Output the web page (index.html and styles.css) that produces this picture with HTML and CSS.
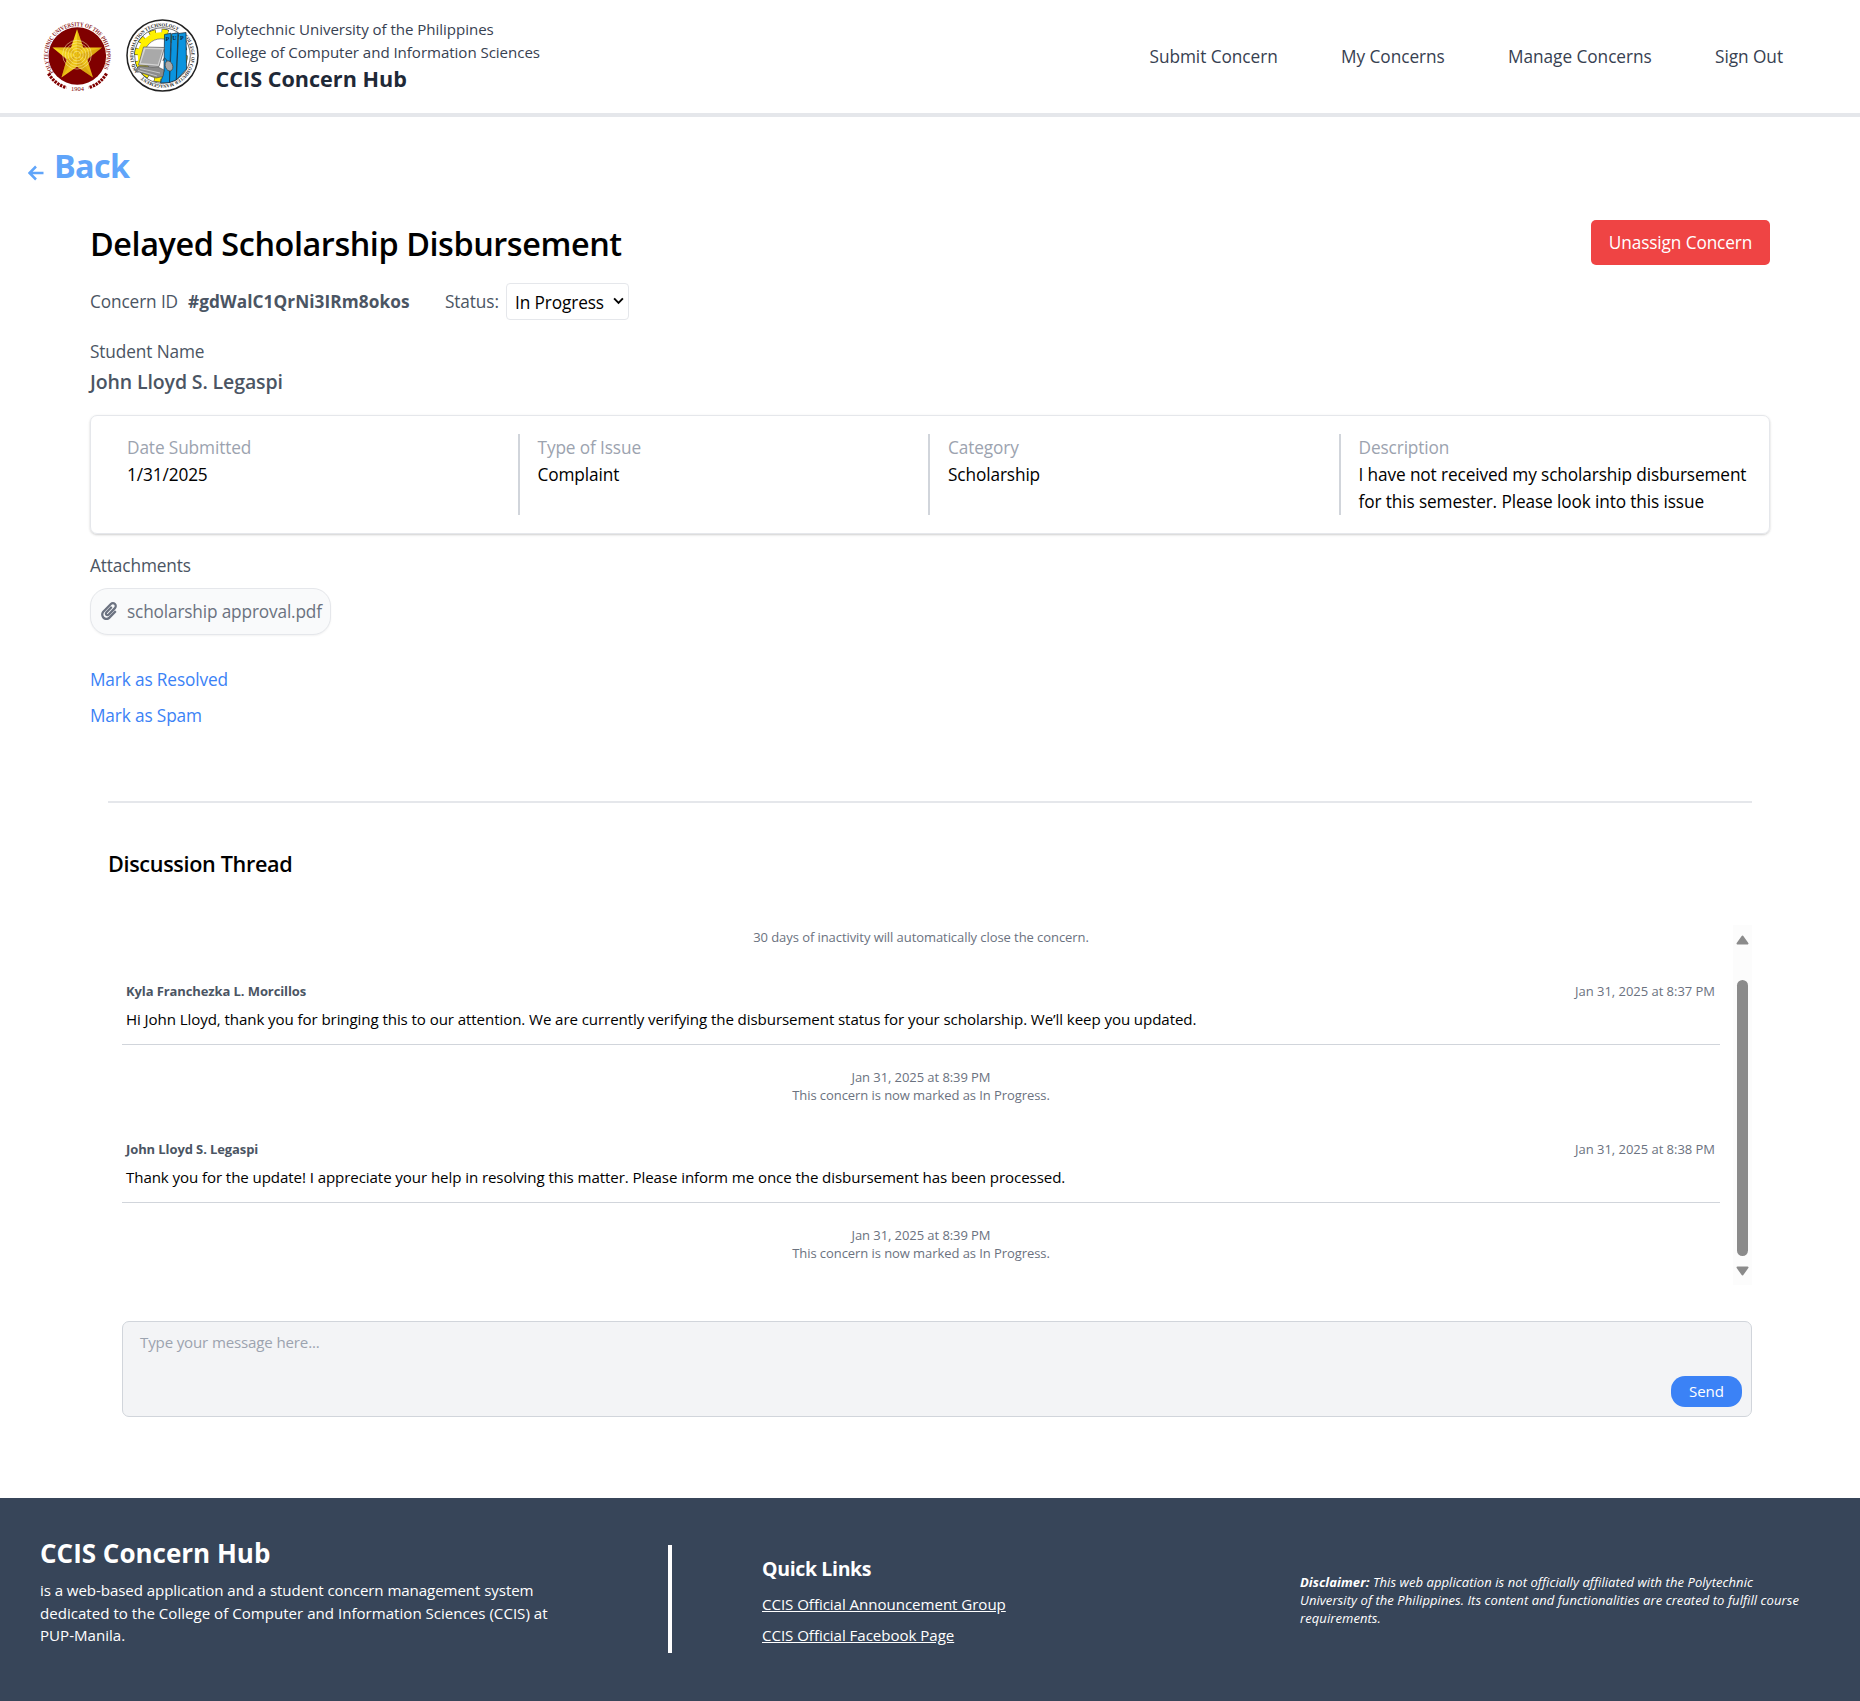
FILE: index.html
```html
<!DOCTYPE html>
<html lang="en">
<head>
<meta charset="utf-8">
<title>CCIS Concern Hub</title>
<link rel="stylesheet" href="styles.css">
</head>
<body>
<header class="topbar">
  <div class="brand">
    <svg class="seal seal-pup" viewBox="0 0 69 74" aria-hidden="true">
      <defs>
        <path id="pupRing" d="M10.5 53.5A29.3 29.3 0 1 1 59.5 51.5"/>
        <linearGradient id="gold" x1="0" y1="0" x2="1" y2="1">
          <stop offset="0" stop-color="#ffe81f"/><stop offset="1" stop-color="#e0a810"/>
        </linearGradient>
      </defs>
      <circle cx="34.3" cy="37" r="28.8" fill="#800000"/>
      <text class="ring-text ring-maroon"><textPath href="#pupRing" textLength="123" lengthAdjust="spacingAndGlyphs">POLYTECHNIC UNIVERSITY OF THE PHILIPPINES</textPath></text>
      <path fill="url(#gold)" d="M34 10.3L40.3 28.6L59 28.6L44.3 40.3L50 58.5L34 47.8L18.5 58.5L23.7 40.3L9.5 28.6L28 28.6Z"/>
      <path fill="#c98d0a" opacity=".4" d="M34 10.3L34 36L40.3 28.6ZM59 28.6L34 36L44.3 40.3ZM50 58.5L34 36L34 47.8ZM18.5 58.5L34 36L23.7 40.3ZM9.5 28.6L34 36L28 28.6Z"/>
      <g fill="none" stroke="#fff3b0" stroke-width=".7" opacity=".75">
        <circle cx="34" cy="35.7" r="3.5"/><circle cx="34" cy="35.7" r="6.2"/><circle cx="34" cy="35.7" r="9"/><circle cx="34" cy="35.7" r="11.8"/><circle cx="34" cy="35.7" r="14.4"/>
      </g>
      <g fill="none" stroke="#800000" stroke-width="3.2" stroke-dasharray="2.4 .9">
        <path d="M5.5 54.5Q12 65.5 23.5 68.5"/><path d="M63.5 54.5Q57 65.5 45.5 68.5"/>
      </g>
      <text class="year" x="34.5" y="72.3">1904</text>
    </svg>
    <svg class="seal seal-ccis" viewBox="0 0 73 73" aria-hidden="true">
      <defs>
        <path id="ccisTop" d="M12.74 53.13A29 29 0 0 1 55.14 14.28"/>
        <path id="ccisSide" d="M58.05 17.1A29 29 0 0 1 15.29 56.28"/>
      </defs>
      <circle cx="36.5" cy="36.5" r="35.5" fill="#fff" stroke="#222" stroke-width="1.5"/>
      <circle cx="36.5" cy="36.5" r="27.8" fill="#fff" stroke="#333" stroke-width=".7"/>
      <text class="ring-text ring-dark"><textPath href="#ccisTop" textLength="79" lengthAdjust="spacingAndGlyphs">AND INFORMATION TECHNOLOGY</textPath></text>
      <text class="ring-text ring-dark"><textPath href="#ccisSide" textLength="88" lengthAdjust="spacingAndGlyphs">COLLEGE OF COMPUTER MANAGEMENT</textPath></text>
      <circle cx="35" cy="36.5" r="22.5" fill="none" stroke="#222" stroke-width="8.4" stroke-dasharray="6.2 5.58"/>
      <circle cx="35" cy="36.5" r="22.5" fill="none" stroke="#fff000" stroke-width="7.4" stroke-dasharray="5.5 6.28" stroke-dashoffset="-.35"/>
      <circle cx="35" cy="36.5" r="20" fill="none" stroke="#fff000" stroke-width="6.5"/>
      <circle cx="35" cy="36.5" r="16.7" fill="#fff" stroke="#444" stroke-width=".6"/>
      <g stroke="#123" stroke-width=".7" fill="#0b94df">
        <path d="M38.5 15.5L45 14.2L43.5 63.5L34.5 64L38 52Z"/>
        <path d="M45.7 14.8L52 13.8L50.3 61L43.5 63.5Z"/>
        <path d="M52.5 14.5L60 13.5L60.5 50L50.3 61Z"/>
      </g>
      <g class="book-letters"><text x="39.5" y="21.5">P</text><text x="46.2" y="21">U</text><text x="54" y="21">P</text></g>
      <path fill="#d3d3d3" stroke="#555" stroke-width=".7" d="M17.5 28L38.5 28.5L33 47.5L12.5 46Z"/>
      <path fill="#a9a9a9" d="M19.5 30L36.5 30.5L31.8 45.5L14.8 44Z"/>
      <path fill="#8b8b8b" stroke="#444" stroke-width=".6" d="M13 47L33 48.5L38 51L37 57.5L30 59L9 51.5Z"/>
      <path stroke="#ddd" stroke-width=".7" fill="none" d="M14 49.5L34 54M12 51.5L31 57"/>
      <ellipse cx="43" cy="47" rx="3.7" ry="5.2" fill="#aaa" stroke="#444" stroke-width=".7" transform="rotate(-20 43 47)"/>
      <path d="M41 42Q38 36 37 42" fill="none" stroke="#333" stroke-width=".8"/>
    </svg>
    <div class="brand-text">
      <span class="brand-line">Polytechnic University of the Philippines</span>
      <span class="brand-line">College of Computer and Information Sciences</span>
      <span class="brand-name">CCIS Concern Hub</span>
    </div>
  </div>
  <nav class="nav">
    <a>Submit Concern</a><a>My Concerns</a><a>Manage Concerns</a><a>Sign Out</a>
  </nav>
</header>

<main class="page">
  <a class="back">
    <svg class="back-arrow" viewBox="0 0 16 16" aria-hidden="true"><path d="M15.5 8H1.8M8 1.5L1.500 8L8 14.5" fill="none" stroke="currentColor" stroke-width="2.5"/></svg>
    <span>Back</span>
  </a>

  <section class="concern">
    <div class="title-row">
      <h1 class="title">Delayed Scholarship Disbursement</h1>
      <button class="unassign">Unassign Concern</button>
    </div>
    <div class="meta">
      <span class="meta-id">Concern ID</span>
      <strong class="meta-code">#gdWalC1QrNi3IRm8okos</strong>
      <span class="meta-status">Status:</span>
      <div class="select">
        <span>In Progress</span>
        <svg viewBox="0 0 12 8" class="chevron" aria-hidden="true"><path d="M1.2 1.2L6 6L10.8 1.2" fill="none" stroke="#000" stroke-width="2.1"/></svg>
      </div>
    </div>
    <div class="label student-label">Student Name</div>
    <div class="student">John Lloyd S. Legaspi</div>

    <div class="card">
      <div class="cell"><div class="cell-label">Date Submitted</div><div>1/31/2025</div></div>
      <div class="cell"><div class="cell-label">Type of Issue</div><div>Complaint</div></div>
      <div class="cell"><div class="cell-label">Category</div><div>Scholarship</div></div>
      <div class="cell"><div class="cell-label">Description</div><div class="desc">I have not received my scholarship disbursement<br>for this semester. Please look into this issue</div></div>
    </div>

    <div class="label">Attachments</div>
    <a class="file">
      <svg class="clip" viewBox="0 0 448 512" aria-hidden="true"><path fill="currentColor" d="M43.246 466.142c-58.43-60.289-57.341-157.511 1.386-217.581L254.392 34c44.316-45.332 116.351-45.336 160.671 0 43.89 44.894 43.943 117.329 0 162.276L232.214 383.128c-29.855 30.537-78.633 30.111-107.982-.998-28.275-29.97-27.368-77.473 1.452-106.953l143.743-146.835c6.182-6.314 16.312-6.422 22.626-.241l22.861 22.379c6.315 6.182 6.422 16.312.241 22.626L171.427 319.927c-4.932 5.045-5.236 13.428-.648 18.292 4.372 4.634 11.245 4.711 15.688.165l182.849-186.851c19.613-20.062 19.613-52.725-.011-72.798-19.189-19.627-49.957-19.637-69.154 0L90.39 293.295c-34.763 35.56-35.299 93.12-1.191 128.313 34.01 35.093 88.985 35.137 123.058.286l172.06-175.999c6.177-6.319 16.307-6.433 22.626-.256l22.877 22.364c6.319 6.177 6.434 16.307.256 22.626l-172.06 175.998c-59.576 60.938-155.943 60.216-214.77-.485z"/></svg>
      <span>scholarship approval.pdf</span>
    </a>
    <div class="actions">
      <a>Mark as Resolved</a>
      <a>Mark as Spam</a>
    </div>

    <section class="thread">
      <hr class="rule">
      <h2 class="thread-title">Discussion Thread</h2>
      <div class="log">
        <div class="log-body">
          <p class="event">30 days of inactivity will automatically close the concern.</p>
          <article class="msg">
            <div class="msg-head"><strong>Kyla Franchezka L. Morcillos</strong><time>Jan 31, 2025 at 8:37 PM</time></div>
            <p class="msg-text">Hi John Lloyd, thank you for bringing this to our attention. We are currently verifying the disbursement status for your scholarship. We’ll keep you updated.</p>
          </article>
          <p class="event event-after">Jan 31, 2025 at 8:39 PM<br>This concern is now marked as In Progress.</p>
          <article class="msg">
            <div class="msg-head"><strong>John Lloyd S. Legaspi</strong><time>Jan 31, 2025 at 8:38 PM</time></div>
            <p class="msg-text">Thank you for the update! I appreciate your help in resolving this matter. Please inform me once the disbursement has been processed.</p>
          </article>
          <p class="event event-after">Jan 31, 2025 at 8:39 PM<br>This concern is now marked as In Progress.</p>
        </div>
        <div class="scrollbar">
          <svg class="sb-arrow" viewBox="0 0 13 10" aria-hidden="true"><path d="M6.5 1.5L11.5 8.5H1.5Z" fill="#8b8b8b" stroke="#8b8b8b" stroke-width="2" stroke-linejoin="round"/></svg>
          <div class="thumb"></div>
          <svg class="sb-arrow" viewBox="0 0 13 10" aria-hidden="true"><path d="M6.5 8.5L11.5 1.5H1.5Z" fill="#8b8b8b" stroke="#8b8b8b" stroke-width="2" stroke-linejoin="round"/></svg>
        </div>
      </div>
      <div class="composer">
        <span class="placeholder">Type your message here...</span>
        <button class="send">Send</button>
      </div>
    </section>
  </section>
</main>

<footer class="footer">
  <div class="foot-about">
    <h2>CCIS Concern Hub</h2>
    <p><span class="foot-first">is a web-based application and a student concern management system</span><br>dedicated to the College of Computer and Information Sciences (CCIS) at<br>PUP-Manila.</p>
  </div>
  <div class="foot-bar"></div>
  <div class="foot-links">
    <h3>Quick Links</h3>
    <a>CCIS Official Announcement Group</a>
    <a>CCIS Official Facebook Page</a>
  </div>
  <p class="foot-note"><strong>Disclaimer:</strong> This web application is not officially affiliated with the Polytechnic<br>University of the Philippines. Its content and functionalities are created to fulfill course<br>requirements.</p>
</footer>
</body>
</html>
```
FILE: styles.css
```css
* { box-sizing: border-box; margin: 0; padding: 0; }
body {
  width: 1860px;
  height: 1701px;
  display: flex;
  flex-direction: column;
  overflow: hidden;
  background: #fff;
  color: #000;
  font: 17.25px/27px "Open Sans", "Noto Sans", sans-serif;
  letter-spacing: -0.12px;
}
button { font: inherit; letter-spacing: inherit; border: 0; color: #fff; }

/* Header */
.topbar {
  height: 117px;
  flex: none;
  display: flex;
  align-items: center;
  justify-content: space-between;
  padding: 0 77px 0 43px;
  border-bottom: 4px solid #e5e7eb;
}
.brand { display: flex; align-items: center; }
.seal { display: block; flex: none; margin-bottom: 2px; overflow: visible; }
.seal-pup { width: 69px; height: 74px; margin-right: 13.5px; }
.seal-ccis { width: 73px; height: 73px; margin-right: 17px; }
.ring-text { font-family: "Liberation Serif", serif; font-weight: 700; letter-spacing: 0; }
.ring-maroon { font-size: 6px; fill: #8c1a1a; }
.ring-dark { font-size: 5px; fill: #222; }
.year { font: 6.5px "Liberation Serif", serif; fill: #800000; text-anchor: middle; letter-spacing: 0; }
.book-letters { font: 700 6px "Liberation Serif", serif; fill: #0a2a4a; letter-spacing: 0; }
.brand-text { display: flex; flex-direction: column; color: #374151; }
.brand-line { font-size: 15.1px; line-height: 23px; letter-spacing: -0.05px; }
.brand-name { font-size: 21.6px; line-height: 31px; font-weight: 700; color: #1f2937; letter-spacing: 0; margin-top: -1px; padding-bottom: 1px; }
.nav { display: flex; gap: 63.3px; color: #374151; letter-spacing: -0.05px; }

/* Concern */
.page { display: flex; flex-direction: column; padding: 28px 90px 0; flex: 1; }
.back {
  display: flex;
  align-items: center;
  gap: 10px;
  height: 40px;
  margin-left: -62px;
  color: #60a5fa;
  font-size: 32.4px;
  font-weight: 700;
  letter-spacing: -0.7px;
}
.back-arrow { width: 16px; height: 16px; margin-top: 16px; }
.concern { display: flex; flex-direction: column; margin-top: 35px; }
.title-row { display: flex; justify-content: space-between; align-items: center; height: 45px; }
.title { font-size: 32.4px; font-weight: 600; line-height: 40px; letter-spacing: -0.43px; }
.unassign { width: 179px; height: 45px; background: #ef4444; border-radius: 5px; }
.meta { display: flex; align-items: center; height: 37px; margin-top: 18px; color: #4b5563; }
.meta-id { width: 98px; }
.meta-code { width: 257px; letter-spacing: 0.06px; }
.meta-status { width: 61px; }
.select {
  display: flex;
  align-items: center;
  justify-content: space-between;
  width: 123px;
  height: 37px;
  padding: 2px 4px 0 8px;
  border: 1px solid #e5e7eb;
  border-radius: 4px;
  color: #000;
}
.chevron { width: 11px; height: 8px; margin-bottom: 3px; }
.label { color: #4b5563; margin-top: 18px; }
.student { font-size: 19.5px; font-weight: 600; line-height: 31.5px; padding-top: 1px; margin-bottom: -1px; color: #4b5563; }
.card {
  display: grid;
  grid-template-columns: repeat(4, minmax(0, 1fr));
  margin-top: 18px;
  padding: 18px;
  border: 1px solid #e5e7eb;
  border-radius: 7px;
  box-shadow: 0 1px 3px rgba(0, 0, 0, .1), 0 1px 2px rgba(0, 0, 0, .1);
}
.cell { padding: 0 18px; border-right: 2px solid #d1d5db; white-space: nowrap; }
.cell:last-child { border-right: 0; }
.cell-label { color: #9ca3af; }
.file {
  display: flex;
  align-items: center;
  gap: 10px;
  width: 241px;
  height: 47px;
  margin-top: 9px;
  padding: 0 9px 0 10px;
  color: #6b7280;
  background: #f9fafb;
  border: 1px solid #e5e7eb;
  border-radius: 18px;
  box-shadow: 0 1px 2px rgba(0, 0, 0, .05);
  white-space: nowrap;
  letter-spacing: -0.16px;
}
.clip { width: 16px; height: 18px; flex: none; }
.actions { display: flex; flex-direction: column; gap: 9px; margin-top: 31px; color: #3b82f6; letter-spacing: -0.14px; }

/* Thread */
.thread { display: flex; flex-direction: column; padding: 0 18px; margin-top: 72px; }
.rule { border: 0; height: 2px; background: #e5e7eb; }
.thread-title { margin-top: 45px; font-size: 21.6px; line-height: 32px; font-weight: 600; letter-spacing: -0.33px; }
.log { display: flex; justify-content: space-between; height: 360px; margin: 45px 0 0 14px; }
.log-body { width: 1598px; padding-top: 3px; }
.event { text-align: center; font-size: 13px; line-height: 18px; color: #6b7280; letter-spacing: -0.07px; }
.event-after { margin-top: 23px; }
.msg { height: 63px; margin-top: 36px; padding: 0 5px 0 4px; border-bottom: 1px solid #d1d5db; }
.msg-head { display: flex; justify-content: space-between; font-size: 13px; line-height: 18px; letter-spacing: -0.03px; color: #6b7280; }
.msg-head strong { color: #4b5563; letter-spacing: -0.1px; }
.msg-text { margin-top: 8px; font-size: 15.1px; line-height: 23px; letter-spacing: -0.1px; white-space: nowrap; }
.msg-head + .msg-text { letter-spacing: -0.09px; }
.scrollbar {
  display: flex;
  flex-direction: column;
  justify-content: space-between;
  align-items: center;
  width: 19px;
  padding: 10px 0 9px;
  background: #fcfcfc;
}
.sb-arrow { width: 13px; height: 10px; }
.thumb { width: 11px; height: 276px; margin-top: 26px; border-radius: 6px; background: #8b8b8b; }
.composer {
  display: flex;
  justify-content: space-between;
  height: 96px;
  margin: 36px 0 0 14px;
  padding: 9px 9px 9px 17px;
  background: #f3f4f6;
  border: 1px solid #d1d5db;
  border-radius: 7px;
  font-size: 15.1px;
  line-height: 23px;
}
.placeholder { color: #9ca3af; letter-spacing: -0.16px; }
.send { align-self: flex-end; width: 71px; height: 31px; border-radius: 14px; background: #3b82f6; }

/* Footer */
.footer {
  display: flex;
  flex: none;
  height: 203px;
  padding-left: 40px;
  background: #374559;
  color: #fff;
  font-size: 15.1px;
}
.foot-about { width: 628px; padding-top: 37px; }
.foot-about h2 { font-size: 26px; line-height: 36px; letter-spacing: 0; }
.foot-about p { margin-top: 8px; line-height: 22.7px; letter-spacing: 0; }
.foot-first { letter-spacing: -0.08px; }
.foot-bar { width: 4px; height: 108px; margin-top: 47px; background: #fff; }
.foot-links { display: flex; flex-direction: column; width: 538px; padding: 56px 0 0 90px; }
.foot-links h3 { font-size: 19.5px; line-height: 30px; letter-spacing: -0.35px; margin-bottom: 5px; }
.foot-links a { line-height: 31px; text-decoration: underline; letter-spacing: -0.05px; }
.foot-note { margin: 75px 0 0 90px; font-size: 13px; line-height: 18px; font-style: italic; white-space: nowrap; letter-spacing: 0.07px; }
```
